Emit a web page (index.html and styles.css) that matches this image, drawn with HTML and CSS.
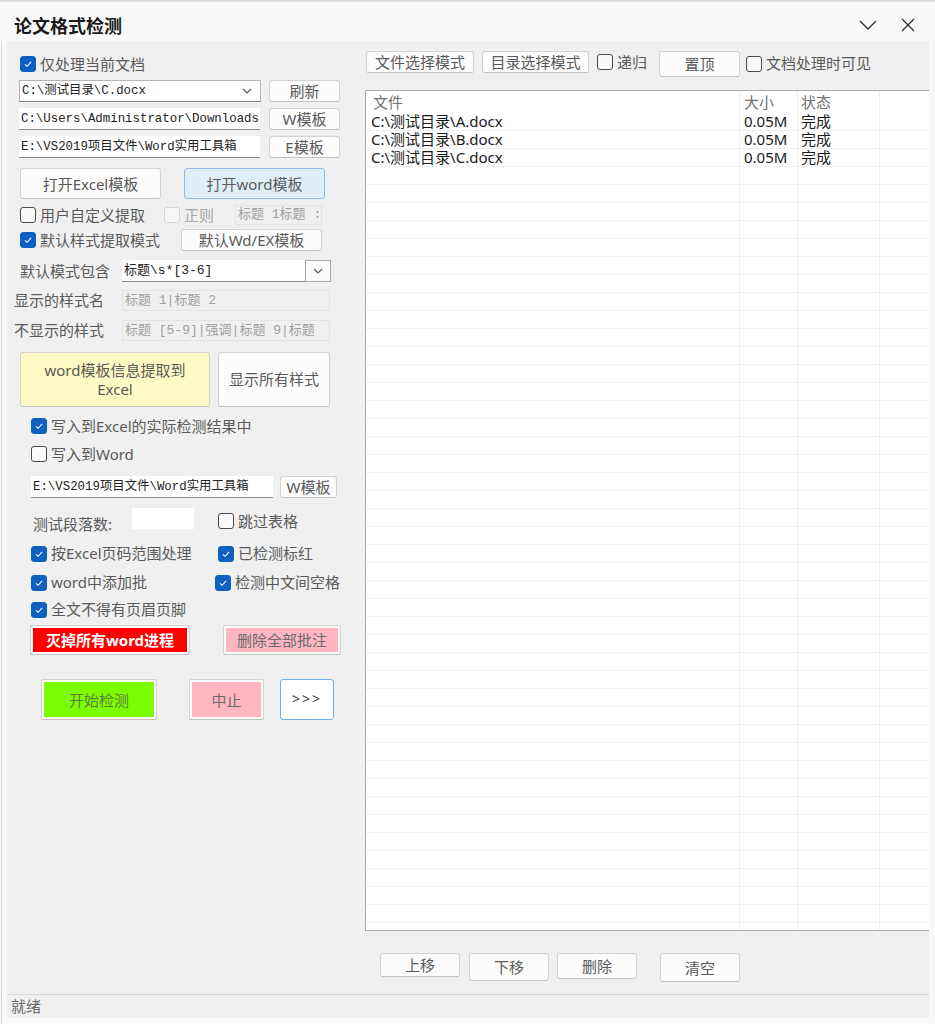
FILE: index.html
```html
<!DOCTYPE html>
<html lang="zh-CN">

<head>
    <meta charset="UTF-8">
    <meta name="viewport" content="width=device-width, initial-scale=1.0">
    <title>论文格式检测</title>
    <link rel="stylesheet" href="styles.css">
</head>

<body>
    <div class="shade"></div>
    <div class="titlebar">
        <span class="title">论文格式检测</span>
        <span class="tb-icons">
            <svg width="18" height="12" viewBox="0 0 18 12"><path d="M1 2 L9 10 L17 2" fill="none" stroke="#333" stroke-width="1.4"/></svg>
            <svg width="14" height="14" viewBox="0 0 14 14"><path d="M1 1 L13 13 M13 1 L1 13" fill="none" stroke="#333" stroke-width="1.4"/></svg>
        </span>
    </div>

    <div class="frame">
        <div class="window">
            <div class="main">
                <!-- 左侧设置区 -->
                <div class="left">
                    <div class="row r1">
                        <label class="chk ml1"><span class="box on"><svg viewBox="0 0 16 16"><path d="M4.5 8.3 L7 10.6 L11.6 5.6"/></svg></span>仅处理当前文档</label>
                    </div>
                    <div class="row r2">
                        <div class="combo w242">C:\测试目录\C.docx<svg class="arrow" width="10" height="6" viewBox="0 0 10 6"><path d="M1 1 L5 5 L9 1"/></svg></div>
                        <button class="btn w71 ml8">刷新</button>
                    </div>
                    <div class="row r3">
                        <div class="text w241">C:\Users\Administrator\Downloads</div>
                        <button class="btn w71 ml9">W模板</button>
                    </div>
                    <div class="row r3">
                        <div class="text w241">E:\VS2019项目文件\Word实用工具箱</div>
                        <button class="btn w71 ml9">E模板</button>
                    </div>
                    <div class="row r5">
                        <button class="btn big ml1 w141">打开Excel模板</button>
                        <button class="btn big active w141" style="margin-left:23px">打开word模板</button>
                    </div>
                    <div class="row r6">
                        <label class="chk ml1" style="width:144px"><span class="box"></span>用户自定义提取</label>
                        <label class="chk disabled" style="width:71px"><span class="box"></span>正则</label>
                        <div class="text dis w87">标题 1标题 :</div>
                    </div>
                    <div class="row r7">
                        <label class="chk ml1" style="width:161px"><span class="box on"><svg viewBox="0 0 16 16"><path d="M4.5 8.3 L7 10.6 L11.6 5.6"/></svg></span>默认样式提取模式</label>
                        <button class="btn w141 h22">默认Wd/EX模板</button>
                    </div>
                    <div class="row r8">
                        <span class="lbl ml1" style="width:102px">默认模式包含</span>
                        <div class="text w183">标题\s*[3-6]</div>
                        <div class="drop"><svg width="10" height="6" viewBox="0 0 10 6"><path d="M1 1 L5 5 L9 1"/></svg></div>
                    </div>
                    <div class="row r9">
                        <span class="lbl" style="width:108px;margin-left:-5px">显示的样式名</span>
                        <div class="text dis w208">标题 1|标题 2</div>
                    </div>
                    <div class="row r10">
                        <span class="lbl" style="width:108px;margin-left:-5px">不显示的样式</span>
                        <div class="text dis w208">标题 [5-9]|强调|标题 9|标题</div>
                    </div>
                    <div class="row r11">
                        <button class="btn tall yellow ml1" style="width:190px">word模板信息提取到<br>Excel</button>
                        <button class="btn tall ml8" style="width:112px">显示所有样式</button>
                    </div>
                    <div class="row r12">
                        <label class="chk ml12"><span class="box on"><svg viewBox="0 0 16 16"><path d="M4.5 8.3 L7 10.6 L11.6 5.6"/></svg></span>写入到Excel的实际检测结果中</label>
                    </div>
                    <div class="row r13">
                        <label class="chk ml12"><span class="box"></span>写入到Word</label>
                    </div>
                    <div class="row r14">
                        <div class="text w242 ml12">E:\VS2019项目文件\Word实用工具箱</div>
                        <button class="btn ml7" style="width:57px">W模板</button>
                    </div>
                    <div class="row r15">
                        <span class="lbl" style="width:99px;margin-left:14px;margin-top:11px">测试段落数:</span>
                        <div class="text plain" style="width:62px"></div>
                        <label class="chk" style="margin-left:24px;margin-top:5px"><span class="box"></span>跳过表格</label>
                    </div>
                    <div class="row r16">
                        <label class="chk ml12" style="width:187px"><span class="box on"><svg viewBox="0 0 16 16"><path d="M4.5 8.3 L7 10.6 L11.6 5.6"/></svg></span>按Excel页码范围处理</label>
                        <label class="chk"><span class="box on"><svg viewBox="0 0 16 16"><path d="M4.5 8.3 L7 10.6 L11.6 5.6"/></svg></span>已检测标红</label>
                    </div>
                    <div class="row r17">
                        <label class="chk ml12" style="width:184px"><span class="box on"><svg viewBox="0 0 16 16"><path d="M4.5 8.3 L7 10.6 L11.6 5.6"/></svg></span>word中添加批</label>
                        <label class="chk"><span class="box on"><svg viewBox="0 0 16 16"><path d="M4.5 8.3 L7 10.6 L11.6 5.6"/></svg></span>检测中文间空格</label>
                    </div>
                    <div class="row r18">
                        <label class="chk ml12"><span class="box on"><svg viewBox="0 0 16 16"><path d="M4.5 8.3 L7 10.6 L11.6 5.6"/></svg></span>全文不得有页眉页脚</label>
                    </div>
                    <div class="row r19">
                        <button class="btn color red" style="width:160px;margin-left:11px">灭掉所有word进程</button>
                        <button class="btn color pink" style="width:118px;margin-left:33px">删除全部批注</button>
                    </div>
                    <div class="row r20">
                        <button class="btn color green" style="width:116px;margin-left:22px">开始检测</button>
                        <button class="btn color pink" style="width:75px;margin-left:32px">中止</button>
                        <button class="btn more" style="width:54px;margin-left:16px">&gt;&gt;&gt;</button>
                    </div>
                </div>

                <!-- 右侧文件列表 -->
                <div class="right">
                    <div class="toolbar">
                        <button class="btn h28 ml1" style="width:108px">文件选择模式</button>
                        <button class="btn h28 ml8" style="width:107px">目录选择模式</button>
                        <label class="chk ml8" style="width:62px"><span class="box"></span>递归</label>
                        <button class="btn" style="width:81px;height:26px;margin-top:3px">置顶</button>
                        <label class="chk" style="margin-left:6px;margin-top:3px"><span class="box"></span>文档处理时可见</label>
                    </div>
                    <div class="list">
                        <div class="lv-head">
                            <span class="c c-file">文件</span>
                            <span class="c c-size">大小</span>
                            <span class="c c-state">状态</span>
                            <span class="c c-rest"></span>
                        </div>
                        <div class="lv-row">
                            <span class="c c-file">C:\测试目录\A.docx</span>
                            <span class="c c-size">0.05M</span>
                            <span class="c c-state">完成</span>
                            <span class="c c-rest"></span>
                        </div>
                        <div class="lv-row">
                            <span class="c c-file">C:\测试目录\B.docx</span>
                            <span class="c c-size">0.05M</span>
                            <span class="c c-state">完成</span>
                            <span class="c c-rest"></span>
                        </div>
                        <div class="lv-row">
                            <span class="c c-file">C:\测试目录\C.docx</span>
                            <span class="c c-size">0.05M</span>
                            <span class="c c-state">完成</span>
                            <span class="c c-rest"></span>
                        </div>
                        <div class="lv-fill">
                            <span class="c c-file"></span>
                            <span class="c c-size"></span>
                            <span class="c c-state"></span>
                            <span class="c c-rest"></span>
                        </div>
                    </div>
                    <div class="bottom-btns">
                        <button class="btn" style="width:80px;height:24px;margin-left:15px">上移</button>
                        <button class="btn" style="width:80px;height:28px;margin-left:9px">下移</button>
                        <button class="btn" style="width:80px;height:26px;margin-left:8px">删除</button>
                        <button class="btn" style="width:80px;height:29px;margin-left:23px">清空</button>
                    </div>
                </div>
            </div>
            <div class="status">就绪</div>
        </div>
    </div>
</body>

</html>
```

FILE: styles.css
```css
body {
    margin: 0;
    background-color: #f9f9f9;
    font-family: "Noto Sans", "Noto Sans CJK SC", sans-serif;
    font-size: 15px;
    color: #5a5a5a;
}

.shade {
    height: 3px;
    background: linear-gradient(#d2d2d2, #f9f9f9);
}

.titlebar {
    height: 38px;
    display: flex;
    align-items: center;
    justify-content: space-between;
    padding: 0 20px 0 14px;
}

.title {
    font-family: "Noto Sans CJK SC", sans-serif;
    font-weight: bold;
    font-size: 18px;
    color: #1a1a1a;
    margin-top: 6px;
}

.tb-icons {
    display: flex;
    align-items: center;
    gap: 24px;
    margin-top: 6px;
}

.frame {
    margin-left: 1px;
    border-left: 1px solid #d5d5d5;
    padding-left: 5px;
    height: 983px;
}

.window {
    width: 922px;
    height: 977px;
    background-color: #f0f0f0;
    display: flex;
    flex-direction: column;
}

.main {
    display: flex;
    height: 953px;
}

.left {
    width: 358px;
    padding-left: 12px;
    box-sizing: border-box;
    display: flex;
    flex-direction: column;
}

.row {
    display: flex;
    align-items: center;
}

.r1 { margin-top: 15px; height: 16px; }
.r2 { margin-top: 8px; height: 22px; }
.r3 { margin-top: 6px; height: 22px; }
.r5 { margin-top: 10px; height: 31px; }
.r6 { margin-top: 6px; height: 20px; }
.r7 { margin-top: 4px; height: 22px; }
.r8 { margin-top: 9px; height: 22px; }
.r9 { margin-top: 8px; height: 21px; }
.r10 { margin-top: 9px; height: 21px; }
.r11 { margin-top: 11px; height: 55px; }
.r12 { margin-top: 11px; height: 16px; }
.r13 { margin-top: 12px; height: 16px; }
.r14 { margin-top: 13px; height: 23px; }
.r15 { margin-top: 10px; height: 21px; }
.r16 { margin-top: 16px; height: 17px; }
.r17 { margin-top: 12px; height: 17px; }
.r18 { margin-top: 10px; height: 17px; }
.r19 { margin-top: 7px; height: 30px; }
.r20 { margin-top: 24px; height: 41px; }

.ml1 { margin-left: 1px; }
.ml7 { margin-left: 7px; }
.ml8 { margin-left: 8px; }
.ml9 { margin-left: 9px; }
.ml12 { margin-left: 12px; }

.w71 { width: 71px; }
.w87 { width: 87px; }
.w141 { width: 141px; }
.w183 { width: 183px; }
.w208 { width: 208px; }
.w241 { width: 241px; }
.w242 { width: 242px; }
.h22 { height: 22px; }
.h28 { height: 28px; }

/* 复选框 */
.chk {
    display: flex;
    align-items: center;
    gap: 4px;
    height: 17px;
    line-height: 17px;
    white-space: nowrap;
    flex-shrink: 0;
}

.box {
    width: 16px;
    height: 16px;
    box-sizing: border-box;
    border: 1px solid #4a4a4a;
    border-radius: 3px;
    background-color: #fafafa;
    flex-shrink: 0;
}

.box.on {
    background-color: #1060c2;
    border-color: #1060c2;
}

.box svg {
    display: block;
    width: 14px;
    height: 14px;
}

.box svg path {
    fill: none;
    stroke: #fff;
    stroke-width: 1.2;
}

.chk.disabled {
    color: #a8a8a8;
}

.chk.disabled .box {
    border-color: #d6d6d6;
    background-color: #f6f6f6;
}

.lbl {
    white-space: nowrap;
    flex-shrink: 0;
    line-height: 17px;
}

/* 按钮 */
.btn {
    height: 22px;
    padding: 0;
    box-sizing: border-box;
    font-family: "Noto Sans", "Noto Sans CJK SC", sans-serif;
    font-size: 15px;
    line-height: 18px;
    color: #5a5a5a;
    background-color: #fcfcfc;
    border: 1px solid #d3d3d3;
    border-bottom-color: #c2c2c2;
    border-radius: 3px;
    flex-shrink: 0;
}

.btn.big {
    height: 31px;
}

.btn.active {
    background-color: #e0eef9;
    border-color: #8bbbe8;
}

.btn.tall {
    height: 55px;
    line-height: 19px;
}

.btn.yellow {
    background-color: #fdfbc3;
}

.btn.color {
    height: 100%;
    box-shadow: inset 0 0 0 2px #fbfbfb;
    border-radius: 2px;
}

.btn.red {
    background-color: #ff0000;
    color: #fff;
    font-weight: bold;
}

.btn.pink {
    background-color: #ffb6c1;
    color: #6a6a6a;
}

.btn.green {
    background-color: #7cfc00;
    color: #5c7f3c;
}

.btn.more {
    height: 41px;
    margin-top: -1px;
    background-color: #fff;
    border-color: #74aee6;
    color: #444;
    letter-spacing: 2px;
    font-size: 14px;
}

/* 文本框 */
.text,
.combo {
    height: 22px;
    box-sizing: border-box;
    background-color: #fff;
    border-bottom: 1px solid #8a8a8a;
    font-family: "Liberation Mono", "Noto Sans CJK SC", monospace;
    font-size: 12.4px;
    line-height: 21px;
    color: #222;
    padding: 1px 0 0 2px;
    white-space: nowrap;
    overflow: hidden;
    flex-shrink: 0;
}

.combo {
    border: 1px solid #b5b5b5;
    border-bottom-color: #8a8a8a;
    display: flex;
    align-items: center;
    justify-content: space-between;
    padding: 0 8px 0 2px;
    line-height: 20px;
}

.combo .arrow path,
.drop path {
    fill: none;
    stroke: #555;
    stroke-width: 1.1;
}

.text.w183 {
    font-size: 13px;
    padding-top: 0;
}

.text.dis {
    height: 21px;
    padding-top: 0;
    background-color: #f0f0f0;
    border: 1px solid #e3e3e3;
    color: #a0a0a0;
    font-size: 13px;
    line-height: 19px;
}

.r6 .text.dis {
    height: 20px;
    line-height: 18px;
}

.text.plain {
    height: 21px;
    border: none;
}

.drop {
    width: 26px;
    height: 22px;
    box-sizing: border-box;
    border: 1px solid #a8a8a8;
    background-color: #fbfbfb;
    display: flex;
    align-items: center;
    justify-content: center;
}

/* 右侧 */
.right {
    width: 564px;
    display: flex;
    flex-direction: column;
}

.toolbar {
    margin-top: 7px;
    height: 28px;
    display: flex;
    align-items: center;
}

.list {
    margin-top: 14px;
    height: 841px;
    box-sizing: border-box;
    border: 1px solid #a9a9a9;
    border-right: none;
    background-color: #fff;
    display: flex;
    flex-direction: column;
    overflow: hidden;
}

.lv-head,
.lv-row,
.lv-fill {
    display: flex;
}

.lv-head {
    height: 22px;
    line-height: 22px;
    color: #707070;
}

.lv-row {
    height: 18px;
    line-height: 17px;
    color: #1a1a1a;
}

.lv-row .c {
    border-bottom: 1px solid #f0f0f0;
}

.lv-fill {
    flex: 1;
}

.lv-fill .c {
    background: repeating-linear-gradient(to bottom, transparent 0, transparent 17px, #f0f0f0 17px, #f0f0f0 18px);
}

.c {
    box-sizing: border-box;
    border-right: 1px solid #f0f0f0;
    padding-left: 5px;
    white-space: nowrap;
}

.c-file { width: 374px; }
.c-size { width: 58px; padding-left: 4px; }
.c-state { width: 82px; padding-left: 3px; }
.c-rest { flex: 1; border-right: none; }

.lv-head .c-file { padding-left: 7px; }

.bottom-btns {
    margin-top: 22px;
    display: flex;
    align-items: flex-start;
}

.status {
    height: 24px;
    box-sizing: border-box;
    border-top: 1px solid #d8d8d8;
    padding-left: 4px;
    line-height: 23px;
    color: #6a6a6a;
}
```
